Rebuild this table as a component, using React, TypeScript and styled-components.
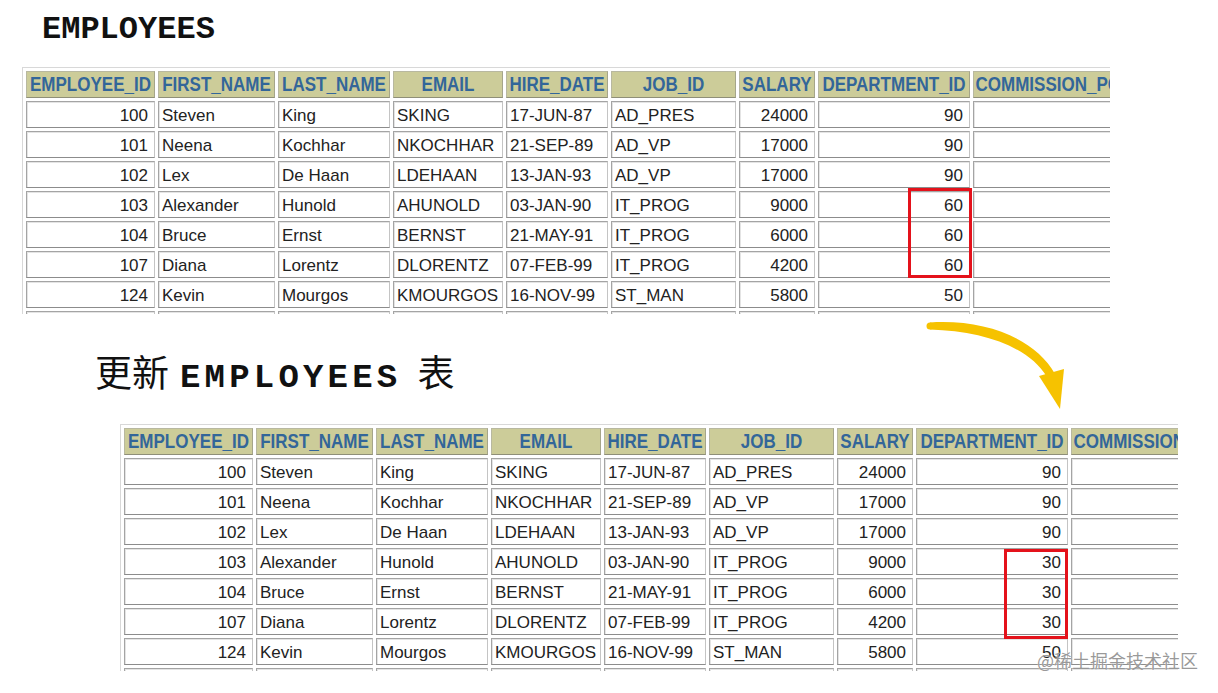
import styled, { createGlobalStyle } from "styled-components";

const GlobalStyle = createGlobalStyle`
    html, body { margin: 0; padding: 0; background: #fff; }
    body { font-family: "Liberation Sans", Arial, sans-serif; }
`

const Page = styled.div`
    position: relative;
    width: 1218px; height: 693px;
    overflow: hidden;
    background: #fff;
`

const Title = styled.h1`
    margin: 0;
    box-sizing: border-box;
    height: 67px;
    padding: 14px 0 0 42px;
    font-family: "Liberation Mono", "Courier New", monospace;
    font-size: 32px;
    line-height: 32px;
    font-weight: bold;
    color: #111;
`

const Middle = styled.div`
    display: flex;
    align-items: flex-start;
    height: 110px;
`

const SubTitle = styled.h2`
    margin: 37px 0 0 95px;
    font-family: "Liberation Mono", "Courier New", monospace;
    font-size: 34px;
    line-height: 40px;
    font-weight: bold;
    color: #111;
    white-space: nowrap;
`

const Cjk = styled.span`
    font-family: "Noto Sans CJK SC", sans-serif;
    font-weight: 400;
    font-size: 37px;
`

const Mono = styled.span`
    letter-spacing: 4.2px;
    margin: 0 16px 0 11px;
`

const Arrow = styled.svg`
    margin: 2px 148px 0 auto;
    flex: none;
`

const TableClip = styled.div<{ $left: number; $width: number }>`
    position: relative;
    box-sizing: border-box;
    margin-left: ${p => p.$left}px;
    width: ${p => p.$width}px;
    height: 247px;
    overflow: hidden;
    border-top: 1px solid #d8d8d8;
    border-left: 1px solid #d8d8d8;
`

const Grid = styled.div`
    display: grid;
    grid-template-columns: 129px 117px 112px 110px 102px 125px 76px 152px 160px;
    grid-auto-rows: 27px;
    gap: 3px;
    padding: 3px;
    width: max-content;
`

const HeadCell = styled.div`
    box-sizing: border-box;
    background: #cccc99;
    border: 1px solid;
    border-color: #b8b8a0 #a5a58a #8f8f78 #b8b8a0;
    color: #336699;
    font-weight: bold;
    font-size: 17px;
    padding-top: 1px;
    line-height: 24px;
    text-align: center;
    white-space: nowrap;
    overflow: hidden;
    & span {
        display: inline-block;
        transform: scaleY(1.2);
    }
`

const Cell = styled.div<{ $align: "left" | "right" }>`
    box-sizing: border-box;
    border: 1px solid;
    border-color: #a4a4a4 #c4c4c4 #8c8c8c #a4a4a4;
    box-shadow: inset 1px 1px 0 #e4e4e4;
    padding: 2px 6px 0 3px;
    color: #222;
    font-size: 17px;
    line-height: 24px;
    text-align: ${p => p.$align};
    white-space: nowrap;
    overflow: hidden;
`

const Mark = styled.div<{ $x: number; $y: number }>`
    position: absolute;
    left: ${p => p.$x}px;
    top: ${p => p.$y}px;
    width: 64px; height: 90px;
    box-sizing: border-box;
    border: 3px solid #e4121b;
`

const Watermark = styled.div`
    position: absolute;
    left: 1037px; top: 648px;
    font-family: "Noto Sans CJK SC", sans-serif;
    font-size: 18px;
    line-height: 24px;
    color: rgba(120, 120, 120, 0.75);
    text-shadow: 0 0 1px #fff;
    white-space: nowrap;
`

const columns = ["EMPLOYEE_ID", "FIRST_NAME", "LAST_NAME", "EMAIL", "HIRE_DATE", "JOB_ID", "SALARY", "DEPARTMENT_ID", "COMMISSION_PCT"];
const rightCols = [0, 6, 7];

type Row = (string | number)[];

const baseRows: Row[] = [
    [100, "Steven", "King", "SKING", "17-JUN-87", "AD_PRES", 24000, 90],
    [101, "Neena", "Kochhar", "NKOCHHAR", "21-SEP-89", "AD_VP", 17000, 90],
    [102, "Lex", "De Haan", "LDEHAAN", "13-JAN-93", "AD_VP", 17000, 90],
    [103, "Alexander", "Hunold", "AHUNOLD", "03-JAN-90", "IT_PROG", 9000, 60],
    [104, "Bruce", "Ernst", "BERNST", "21-MAY-91", "IT_PROG", 6000, 60],
    [107, "Diana", "Lorentz", "DLORENTZ", "07-FEB-99", "IT_PROG", 4200, 60],
    [124, "Kevin", "Mourgos", "KMOURGOS", "16-NOV-99", "ST_MAN", 5800, 50],
];

const updatedRows: Row[] = baseRows.map(r => r[7] === 60 ? [...r.slice(0, 7), 30] : r);

const EmpTable = (props: { rows: Row[]; left: number; width: number; mark: { x: number; y: number } }) => {
    const rows = [...props.rows, ["", "", "", "", "", "", "", ""]];
    return (
        <TableClip $left={props.left} $width={props.width}>
            <Grid>
                {columns.map(c => <HeadCell key={c}><span>{c}</span></HeadCell>)}
                {rows.map((r, i) =>
                    columns.map((c, j) => (
                        <Cell key={i + c} $align={rightCols.includes(j) ? "right" : "left"}>
                            {r[j] ?? ""}
                        </Cell>
                    ))
                )}
            </Grid>
            <Mark $x={props.mark.x} $y={props.mark.y} />
        </TableClip>
    );
}

const App = () => {
    return (
        <Page>
            <GlobalStyle />
            <Title>EMPLOYEES</Title>
            <EmpTable rows={baseRows} left={22} width={1088} mark={{ x: 885, y: 120 }} />
            <Middle>
                <SubTitle><Cjk>更新</Cjk><Mono>EMPLOYEES</Mono><Cjk>表</Cjk></SubTitle>
                <Arrow width="150" height="96" viewBox="0 0 150 96">
                    <path d="M10 6.5 C 65 3 115 22 135 58 L 127 61 C 108 30 62 15 10 13.5 Z" fill="#f6c200" />
                    <circle cx="10" cy="10" r="3.5" fill="#f6c200" />
                    <polygon points="119,60 144,53 140,93" fill="#f6c200" />
                </Arrow>
            </Middle>
            <EmpTable rows={updatedRows} left={120} width={1058} mark={{ x: 883, y: 124 }} />
            <Watermark>@稀土掘金技术社区</Watermark>
        </Page>
    );
}

export default App;
